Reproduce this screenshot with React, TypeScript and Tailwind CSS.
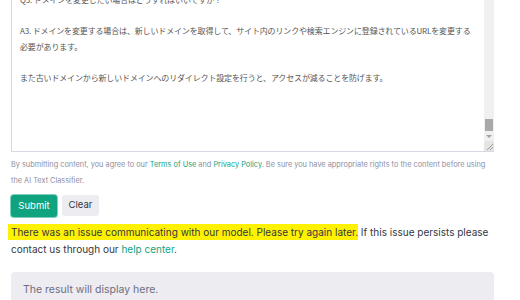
import React from 'react'

const jp = { fontFamily: '"Noto Sans CJK JP", "Noto Sans", sans-serif' }
const ui = { fontFamily: 'Inter, "Noto Sans", sans-serif' }

const lines = [
  'Q3. ドメインを変更したい場合はどうすればいいですか？',
  '',
  'A3. ドメインを変更する場合は、新しいドメインを取得して、サイト内のリンクや検索エンジンに登録されているURLを変更する',
  '必要があります。',
  '',
  'また古いドメインから新しいドメインへのリダイレクト設定を行うと、アクセスが減ることを防げます。',
]

function Scrollbar() {
  return (
    <div className="flex w-[10px] flex-col bg-[#f0f0f0]">
      <div className="flex-1" />
      <div className="mx-[1px] h-[12px] bg-[#a9a9a9]" />
      <div className="flex h-[10px] items-center justify-center">
        <div className="h-0 w-0 border-x-[3px] border-t-[3px] border-x-transparent border-t-[#a0a0a0]" />
      </div>
      <div className="h-[10px] bg-[#e4e4e4]">
        <svg width="10" height="10" viewBox="0 0 10 10">
          <path d="M9 3L3 9M9 6L6 9" stroke="#8a8a8a" strokeWidth="0.8" />
        </svg>
      </div>
    </div>
  )
}

export default function App() {
  return (
    <div className="h-[300px] w-[520px] overflow-hidden bg-white" style={ui}>
      <div className="w-[483px] pl-[11px] box-content">
        {/* textarea, scrolled past its top */}
        <div className="flex h-[152px] border-b border-l border-[#d9d9e3]">
          <div className="flex-1 overflow-hidden pl-[8px]">
            <div className="-mt-[8px] text-[8px] leading-[15.5px] tracking-[-0.15px] text-[#555]" style={jp}>
              {lines.map((l, i) => (
                <div key={i} className="h-[15.5px] whitespace-nowrap">{l}</div>
              ))}
            </div>
          </div>
          <Scrollbar />
        </div>

        <p className="mt-[5px] whitespace-nowrap text-[7.35px] leading-[16px] text-[#8e8ea0]">
          By submitting content, you agree to our <span className="text-[#10a37f]">Terms of Use</span> and{' '}
          <span className="text-[#10a37f]">Privacy Policy</span>. Be sure you have appropriate rights to the content before using
          <br />
          the AI Text Classifier.
        </p>

        <div className="mt-[6px] flex gap-[5px]">
          <button className="h-[22px] w-[46px] rounded-[3px] bg-[#10a37f] text-[9.5px] text-white ring-1 ring-[#7fd1bd]">
            Submit
          </button>
          <button className="h-[21px] w-[37px] rounded-[3px] bg-[#ececf1] text-[9.5px] text-[#353740]">Clear</button>
        </div>

        <p className="mt-[7px] text-[10px] leading-[17px] text-[#353740]">
          <span className="-ml-[3px] bg-[#fff200] pl-[3px] py-[2px]">
            There was an issue communicating with our model. Please try again later.
          </span>{' '}
          If this issue persists please contact us through our <span className="text-[#10a37f]">help center</span>.
        </p>

        <div className="mt-[14px] h-[40px] rounded-t-[4px] bg-[#ececf1] px-[12px] pt-[10px] text-[10.5px] text-[#6e6e80]">
          The result will display here.
        </div>
      </div>
    </div>
  )
}
